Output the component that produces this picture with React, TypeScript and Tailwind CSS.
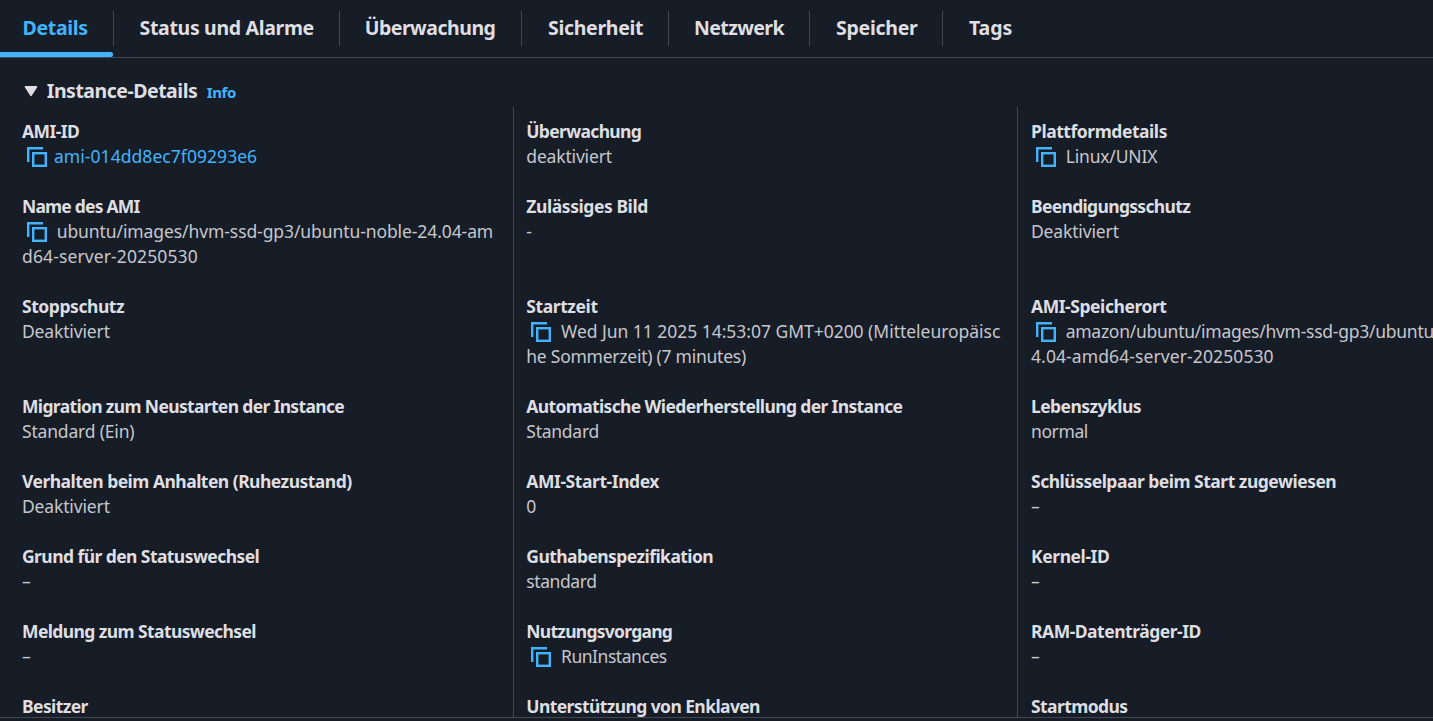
type Tab = { label: string; tracking: string; width: string };
type Line = { text: string; tracking: string };
type Item = { label: string; tracking: string; lines: Line[]; copy?: boolean; link?: boolean };

const tabs: Tab[] = [
  { label: 'Details', tracking: 'tracking-[-0.33px]', width: 'w-[114px] pl-[22.5px] text-[#42b4ff]' },
  { label: 'Status und Alarme', tracking: 'tracking-[-0.33px]', width: 'w-[226px] pl-[25.5px]' },
  { label: 'Überwachung', tracking: 'tracking-[-0.5px]', width: 'w-[182px] pl-[24.7px]' },
  { label: 'Sicherheit', tracking: 'tracking-[-0.3px]', width: 'w-[147px] pl-[26px]' },
  { label: 'Netzwerk', tracking: 'tracking-[-0.6px]', width: 'w-[141px] pl-[25px]' },
  { label: 'Speicher', tracking: 'tracking-[-0.26px]', width: 'w-[133px] pl-[26px]' },
  { label: 'Tags', tracking: 'tracking-[-0.1px]', width: 'pl-[26px]' },
];

const dash: Line[] = [{ text: '–', tracking: '' }];
const off: Line[] = [{ text: 'Deaktiviert', tracking: 'tracking-[-0.15px]' }];

const columns: Item[][] = [
  [
    { label: 'AMI-ID', tracking: 'tracking-[-0.55px]', copy: true, link: true, lines: [{ text: 'ami-014dd8ec7f09293e6', tracking: 'tracking-[0.05px]' }] },
    {
      label: 'Name des AMI', tracking: 'tracking-[-0.8px]', copy: true,
      lines: [
        { text: 'ubuntu/images/hvm-ssd-gp3/ubuntu-noble-24.04-am', tracking: 'tracking-[-0.09px]' },
        { text: 'd64-server-20250530', tracking: 'tracking-[0.12px]' },
      ],
    },
    { label: 'Stoppschutz', tracking: 'tracking-[-0.45px]', lines: off },
    { label: 'Migration zum Neustarten der Instance', tracking: 'tracking-[-0.66px]', lines: [{ text: 'Standard (Ein)', tracking: 'tracking-[-0.18px]' }] },
    { label: 'Verhalten beim Anhalten (Ruhezustand)', tracking: 'tracking-[-0.52px]', lines: off },
    { label: 'Grund für den Statuswechsel', tracking: 'tracking-[-0.57px]', lines: dash },
    { label: 'Meldung zum Statuswechsel', tracking: 'tracking-[-0.6px]', lines: dash },
    { label: 'Besitzer', tracking: 'tracking-[-0.6px]', lines: [] },
  ],
  [
    { label: 'Überwachung', tracking: 'tracking-[-0.67px]', lines: [{ text: 'deaktiviert', tracking: 'tracking-[-0.17px]' }] },
    { label: 'Zulässiges Bild', tracking: 'tracking-[-0.43px]', lines: [{ text: '-', tracking: '' }] },
    {
      label: 'Startzeit', tracking: 'tracking-[-0.42px]', copy: true,
      lines: [
        { text: 'Wed Jun 11 2025 14:53:07 GMT+0200 (Mitteleuropäisc', tracking: 'tracking-[-0.03px]' },
        { text: 'he Sommerzeit) (7 minutes)', tracking: 'tracking-[-0.25px]' },
      ],
    },
    { label: 'Automatische Wiederherstellung der Instance', tracking: 'tracking-[-0.64px]', lines: [{ text: 'Standard', tracking: 'tracking-[-0.25px]' }] },
    { label: 'AMI-Start-Index', tracking: 'tracking-[-0.43px]', lines: [{ text: '0', tracking: '' }] },
    { label: 'Guthabenspezifikation', tracking: 'tracking-[-0.57px]', lines: [{ text: 'standard', tracking: 'tracking-[-0.42px]' }] },
    { label: 'Nutzungsvorgang', tracking: 'tracking-[-0.74px]', copy: true, lines: [{ text: 'RunInstances', tracking: 'tracking-[-0.46px]' }] },
    { label: 'Unterstützung von Enklaven', tracking: 'tracking-[-0.6px]', lines: [] },
  ],
  [
    { label: 'Plattformdetails', tracking: 'tracking-[-0.45px]', copy: true, lines: [{ text: 'Linux/UNIX', tracking: 'tracking-[-0.18px]' }] },
    { label: 'Beendigungsschutz', tracking: 'tracking-[-0.68px]', lines: off },
    {
      label: 'AMI-Speicherort', tracking: 'tracking-[-0.44px]', copy: true,
      lines: [
        { text: 'amazon/ubuntu/images/hvm-ssd-gp3/ubuntu', tracking: 'tracking-[-0.26px]' },
        { text: '4.04-amd64-server-20250530', tracking: 'tracking-[0.1px]' },
      ],
    },
    { label: 'Lebenszyklus', tracking: 'tracking-[-0.56px]', lines: [{ text: 'normal', tracking: 'tracking-[-0.4px]' }] },
    { label: 'Schlüsselpaar beim Start zugewiesen', tracking: 'tracking-[-0.5px]', lines: dash },
    { label: 'Kernel-ID', tracking: 'tracking-[-0.42px]', lines: dash },
    { label: 'RAM-Datenträger-ID', tracking: 'tracking-[-0.48px]', lines: dash },
    { label: 'Startmodus', tracking: 'tracking-[-0.58px]', lines: [] },
  ],
];

const columnStyle = [
  'pl-[22px]',
  'border-l border-[#424650] pl-[12.3px]',
  'border-l border-[#424650] pl-[13px]',
];

function CopyIcon() {
  return (
    <svg width="20" height="20" viewBox="0 0 20 20" fill="none" stroke="#42b4ff" strokeWidth="2.4" className="ml-[5px] shrink-0">
      <path d="M1.2 15V1.2H16" />
      <rect x="6.2" y="6.2" width="12.6" height="12.6" />
    </svg>
  );
}

function Field({ item }: { item: Item }) {
  return (
    <div className="whitespace-nowrap text-[17.5px] leading-[25px]">
      <dt className={`font-bold text-[#dedee3] ${item.tracking}`}>{item.label}</dt>
      {item.lines.map((line, i) => (
        <dd key={line.text} className={`flex items-center ${item.link ? 'gap-[7px] text-[#42b4ff]' : 'gap-[9.7px] text-[#c6c6cd]'}`}>
          {item.copy && i === 0 && <CopyIcon />}
          <span className={line.tracking}>{line.text}</span>
        </dd>
      ))}
    </div>
  );
}

export default function App() {
  return (
    <div className="h-[721px] w-full overflow-hidden bg-[#161d26] font-['Noto_Sans',sans-serif]">
      <div className="flex h-[717px] flex-col overflow-hidden">
        <nav className="flex h-[58px] shrink-0 border-b border-[#424650] text-[19.5px] font-bold text-[#dedee3]">
          {tabs.map((tab, i) => (
            <div key={tab.label} className={`relative h-[57px] pt-[11px] ${tab.width}`}>
              <div className={`flex h-[35px] items-center leading-[25px] ${tab.tracking}`}>
                <span className="-mt-[2px]">{tab.label}</span>
              </div>
              {i < tabs.length - 1 && <span className="absolute right-0 top-[11px] h-[35px] w-px bg-[#424650]" />}
              {i === 0 && <span className="absolute bottom-0 left-0 h-[5px] w-[113px] rounded-r-[2px] bg-[#42b4ff]" />}
            </div>
          ))}
        </nav>
        <div className="flex h-[49px] shrink-0 items-center pl-6 pt-[16px]">
          <svg width="14" height="12" viewBox="0 0 14 12" className="mr-[8.8px]">
            <path d="M1.6 1.8h10.8L7 10.2z" fill="#dedee3" stroke="#dedee3" strokeWidth="1.8" strokeLinejoin="round" />
          </svg>
          <h2 className="text-[19.5px] font-bold leading-[25px] tracking-[-0.49px] text-[#dedee3]">Instance-Details</h2>
          <a className="ml-[9.5px] mt-[2px] text-[15px] font-bold leading-5 tracking-[-0.4px] text-[#42b4ff]">Info</a>
        </div>
        <div className="grid shrink-0 grid-cols-[513px_504px_504px] grid-rows-[87px_100px_100px_75px_75px_75px_75px_75px]">
          {columns.map((items, i) => (
            <dl key={i} className={`row-span-8 grid grid-rows-subgrid pt-3 ${columnStyle[i]}`}>
              {items.map((item) => (
                <Field key={item.label} item={item} />
              ))}
            </dl>
          ))}
        </div>
      </div>
      <div className="h-1 border-t border-[#424650]" />
    </div>
  );
}
